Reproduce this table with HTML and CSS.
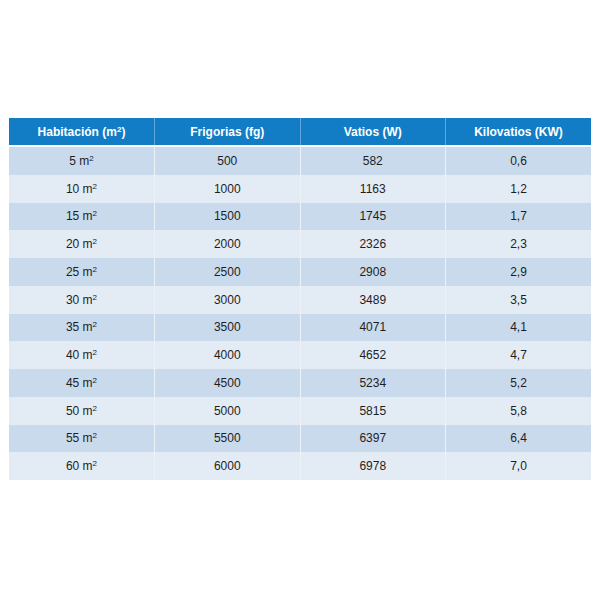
FILE: index.html
```html
<!DOCTYPE html>
<html lang="es">
<head>
<meta charset="utf-8">
<title>Tabla de frigorías</title>
<link rel="stylesheet" href="styles.css">
</head>
<body>
<div class="page">
<table class="tabla">
<thead>
<tr><th>Habitación (m<sup>2</sup>)</th><th>Frigorias (fg)</th><th>Vatios (W)</th><th>Kilovatios (KW)</th></tr>
</thead>
<tbody>
<tr><td>5 m<sup>2</sup></td><td>500</td><td>582</td><td>0,6</td></tr>
<tr><td>10 m<sup>2</sup></td><td>1000</td><td>1163</td><td>1,2</td></tr>
<tr><td>15 m<sup>2</sup></td><td>1500</td><td>1745</td><td>1,7</td></tr>
<tr><td>20 m<sup>2</sup></td><td>2000</td><td>2326</td><td>2,3</td></tr>
<tr><td>25 m<sup>2</sup></td><td>2500</td><td>2908</td><td>2,9</td></tr>
<tr><td>30 m<sup>2</sup></td><td>3000</td><td>3489</td><td>3,5</td></tr>
<tr><td>35 m<sup>2</sup></td><td>3500</td><td>4071</td><td>4,1</td></tr>
<tr><td>40 m<sup>2</sup></td><td>4000</td><td>4652</td><td>4,7</td></tr>
<tr><td>45 m<sup>2</sup></td><td>4500</td><td>5234</td><td>5,2</td></tr>
<tr><td>50 m<sup>2</sup></td><td>5000</td><td>5815</td><td>5,8</td></tr>
<tr><td>55 m<sup>2</sup></td><td>5500</td><td>6397</td><td>6,4</td></tr>
<tr><td>60 m<sup>2</sup></td><td>6000</td><td>6978</td><td>7,0</td></tr>
</tbody>
</table>
</div>
</body>
</html>
```
FILE: styles.css
```css
html, body {
  margin: 0;
  padding: 0;
  background: #ffffff;
}
.page {
  width: 600px;
  height: 600px;
  padding: 118px 9px 0 9px;
  box-sizing: border-box;
}
.tabla {
  width: 582px;
  border-collapse: collapse;
  table-layout: fixed;
  font-family: "Liberation Sans", Arial, sans-serif;
  font-size: 12px;
  color: #1e1e1e;
  text-align: center;
}
.tabla th {
  background: #127cc5;
  color: #ffffff;
  font-weight: bold;
  height: 27px;
  padding: 0;
  border-left: 1px solid #5fa8dc;
  border-bottom: 2px solid #ffffff;
}
.tabla th:first-child { border-left: none; }
.tabla td {
  height: 27.75px;
  padding: 0;
  border-left: 1px solid #edf2f9;
}
.tabla td:first-child { border-left: none; }
.tabla tbody tr:nth-child(odd) td { background: #c9daec; }
.tabla tbody tr:nth-child(even) td { background: #e3ebf5; }
.tabla sup {
  font-size: 8px;
  line-height: 0;
  vertical-align: 4px;
}
```
